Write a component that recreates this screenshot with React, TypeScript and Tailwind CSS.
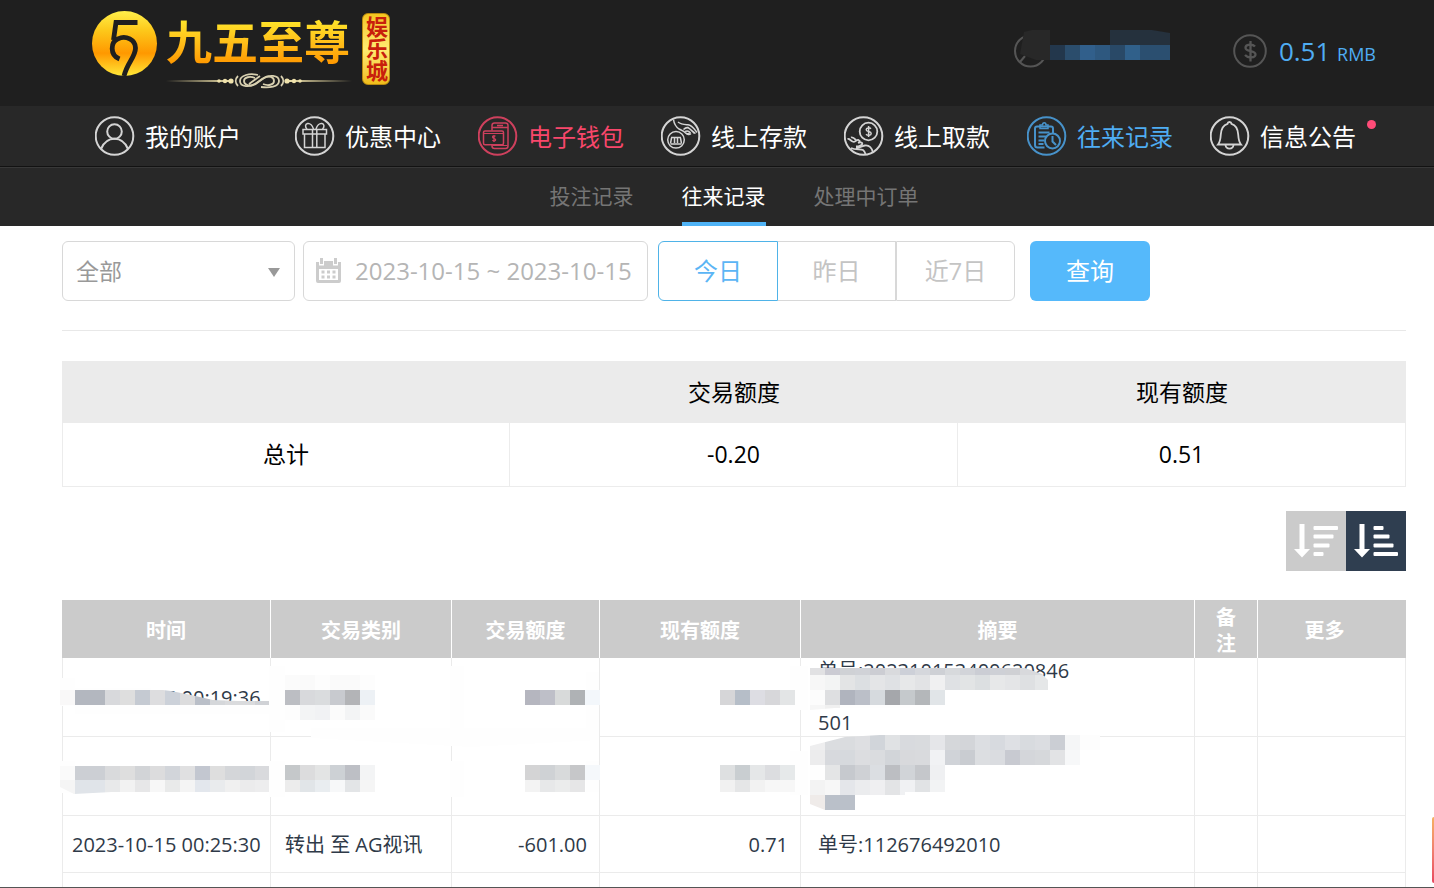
import React, { useState } from 'react';
import clsx from 'clsx';

type Strip = { x: number; y: number; h: number; colors: string[] };

const NAV_ITEMS = [
  { key: 'account', label: '我的账户', icon: AccountIcon },
  { key: 'promo', label: '优惠中心', icon: GiftIcon },
  { key: 'wallet', label: '电子钱包', icon: WalletIcon },
  { key: 'deposit', label: '线上存款', icon: DepositIcon },
  { key: 'withdraw', label: '线上取款', icon: WithdrawIcon },
  { key: 'records', label: '往来记录', icon: RecordsIcon },
  { key: 'notice', label: '信息公告', icon: BellIcon },
];

const SUB_TABS = ['投注记录', '往来记录', '处理中订单'];
const RANGES = ['今日', '昨日', '近7日'];

function IconFrame({ children }: { children: React.ReactNode }) {
  return (
    <svg className="h-10 w-10 shrink-0" viewBox="0 0 40 40" fill="none" stroke="currentColor" strokeWidth="1.5" aria-hidden="true">
      <circle cx="19.5" cy="20" r="18.8" strokeWidth="2" />
      {children}
    </svg>
  );
}

function AccountIcon() {
  return (
    <IconFrame>
      <circle cx="19.5" cy="15.5" r="7.3" strokeWidth="2" />
      <path d="M6 33c2.500-6 7.500-10.200 13.500-10.200S30.500 27 33 33" strokeWidth="2" />
    </IconFrame>
  );
}

function GiftIcon() {
  return (
    <IconFrame>
      <path d="M8 13.500h23.500v4.500H8zM9.500 18v13.500H30V18M17.500 13.500v18M21.800 13.500v18" />
      <path d="M18.500 13c-1-3.500-3.500-6-6-5.500s-2.500 3.500-.5 5.500M21 13c1-3.500 3.500-6 6-5.500s2.500 3.500.5 5.500" />
    </IconFrame>
  );
}

function WalletIcon() {
  return (
    <IconFrame>
      <path d="M14 14.500V9.500a2.500 2.500 0 0 1 2.500-2.500H27.500A2.500 2.500 0 0 1 30 9.500V30a2.500 2.500 0 0 1-2.500 2.500H16.500A2.500 2.500 0 0 1 14 30v-1M19 9.500h6M14.500 11.500h15" />
      <rect x="5.500" y="15" width="20" height="13.800" rx="1.500" />
      <path d="M5.500 17.500h20M14.500 29.500h15" strokeWidth="1" />
      <path d="M17.500 20.300c-1-.8-3-.6-3 .8 0 1.700 3.200 1 3.200 2.700 0 1.400-2.200 1.600-3.400.6M16 19v7" strokeWidth="1.200" />
    </IconFrame>
  );
}

function DepositIcon() {
  return (
    <IconFrame>
      <circle cx="15" cy="23.800" r="8.300" />
      <path d="M9.500 28h11M10.500 22l-1 5.500M13.500 22v5M16.500 22v5M19.500 22l1 5.500M10 21.500h10" strokeWidth="1.500" />
      <path d="M12.500 3.500c.5 4 2 7 5.500 9.500 2.500 1.500 4.500 1.500 6 3.500 1.500 1.500 3.500 1.500 4.500.5M17 6c3 2.500 6.500 2.500 10 2.800 4 .4 6.500 4.500 9 7.700" />
      <path d="M22.500 13.500c2-2 4.500-2.500 6.500-.5l4.500 4.500M24 15.500c2-1 4-.5 5.500 1.500M26.500 11l8 6.500M25 17c1 1.800 3.500 2 5 .5" />
    </IconFrame>
  );
}

function WithdrawIcon() {
  return (
    <IconFrame>
      <circle cx="24.500" cy="15.500" r="8.800" strokeWidth="1.800" />
      <path d="M27 12.700c-1.500-1.400-4.800-1.100-4.800 1 0 2.500 5 1.300 5 3.700 0 2.200-3.500 2.400-5.200.8M24.600 10v11" />
      <path d="M3.500 23c2-.5 3 1.500 5 2.500 3.500 1.500 3-2 6-1.500 2 .5 1.500 2-.5 2.800 2-.8 4-.8 4.300.7.200 1.500-3 3-6.300 3" strokeWidth="1.800" />
      <path d="M7 21.500c1-.5 3 .5 5 2.500M12 31.500c4 .5 6-1.500 9-2 4-.5 6.500 1.500 8 7M7 32c5 2.500 9 .5 12 2 1.500 1 2 2.500 2.500 4" strokeWidth="1.800" />
    </IconFrame>
  );
}

function RecordsIcon() {
  return (
    <IconFrame>
      <path d="M17.500 31.500h-7A2.500 2.500 0 0 1 8 29V12.500a2 2 0 0 1 2-2h14a2 2 0 0 1 2 2V17" strokeWidth="2" />
      <path d="M13 12.500V9h2.500c0-3 3.500-3 3.500 0H21v3.500z" />
      <path d="M11.500 16.500h11M11.500 20.500h7.500M11.500 24.500h5.500M11.500 28h5" strokeWidth="1.800" />
      <circle cx="25.500" cy="25" r="7.500" strokeWidth="2" />
      <path d="M25.500 20v5.500l3.500 3.500" strokeWidth="2" />
    </IconFrame>
  );
}

function BellIcon() {
  return (
    <IconFrame>
      <path d="M8 28.500c2.200-2.500 2.500-5 2.800-10C11.200 12 13.500 9 17.500 7.800c.3-2.400 3.700-2.400 4 0 4 1.200 6.300 4.200 6.700 10.700.3 5 .6 7.500 2.800 10z" strokeWidth="1.800" />
      <path d="M15.500 29c.5 4.800 7.500 4.800 8 0" strokeWidth="1.800" />
    </IconFrame>
  );
}

function Logo() {
  return (
    <a href="#home" className="flex items-start" aria-label="九五至尊娱乐城">
      <svg className="mt-[11px] h-[66px] w-[66px]" viewBox="0 0 66 66" aria-hidden="true">
        <defs>
          <linearGradient id="coin" x1="0" y1="0" x2="0" y2="1">
            <stop offset="0" stopColor="#fff04a" />
            <stop offset="0.3" stopColor="#fdc81a" />
            <stop offset="0.650" stopColor="#ff9800" />
            <stop offset="1" stopColor="#ffe838" />
          </linearGradient>
        </defs>
        <circle cx="32.500" cy="32.500" r="32.500" fill="url(#coin)" />
        <g fill="none" stroke="#1f1f1f" strokeWidth="4.800">
          <path d="M45.500 11.500H24L21.500 29" />
          <path d="M27.500 48C17.500 44 18.500 31 26 27.800 34 24 43.500 29 43.500 37c0 9-8 14-11.500 28" />
        </g>
      </svg>
      <div className="ml-2 mt-[18px]">
        <div className="bg-gradient-to-b from-[#ffe92c] to-[#ff9800] bg-clip-text text-[46px] leading-[46px] font-bold text-transparent">
          九五至尊
        </div>
        <svg className="mt-[9px] h-4 w-[188px]" viewBox="0 0 188 16" fill="none" aria-hidden="true">
          <defs>
            <linearGradient id="rule" x1="0" y1="0" x2="1" y2="0">
              <stop offset="0" stopColor="#e8d9a0" stopOpacity="0" />
              <stop offset="1" stopColor="#efe2ac" />
            </linearGradient>
            <linearGradient id="rule-end" x1="1" y1="0" x2="0" y2="0">
              <stop offset="0" stopColor="#e8d9a0" stopOpacity="0" />
              <stop offset="1" stopColor="#efe2ac" />
            </linearGradient>
          </defs>
          <path d="M0 7h66v2H0z" fill="url(#rule)" />
          <path d="M122 7h64v2h-64z" fill="url(#rule-end)" />
          <g fill="#efe2ac">
            <circle cx="53" cy="8" r="1.800" />
            <circle cx="59" cy="8" r="2.200" />
            <circle cx="65" cy="8" r="2.600" />
            <circle cx="121" cy="8" r="2.600" />
            <circle cx="128" cy="8" r="2.200" />
            <circle cx="134" cy="8" r="1.800" />
          </g>
          <g stroke="#d8d0b0" strokeWidth="1.800">
            <path d="M72 3c-3 3-3 7 0 10M115 3c3 3 3 7 0 10" />
            <path d="M92 2C84 0 74 2 74 8s10 7 17 2l7-5c5-3 10-1 10 3s-6 5-11 3" />
            <path d="M83 11l11-8M95 14c8 1 18 0 18-6s-10-7-17-2l-7 5c-5 3-11 1-11-3s6-5 11-3" />
          </g>
        </svg>
      </div>
      <div className="ml-2 mt-[13px] flex h-[72px] w-7 items-center justify-center rounded-md border border-[#b98a10] bg-gradient-to-b from-[#f5c51c] via-[#ffec70] to-[#f0bd18] text-[22px] leading-[26px] font-bold text-[#c8200c]">
        <span className="[writing-mode:vertical-rl]">娱乐城</span>
      </div>
    </a>
  );
}

function Header() {
  return (
    <header className="flex h-[106px] items-start justify-between bg-[#1f1f1f] pr-[58px] pl-[92px]">
      <Logo />
      <div className="mt-[30px] flex items-center">
        <svg className="h-[42px] w-[156px]" viewBox="0 0 156 42" aria-hidden="true">
          <circle cx="16.500" cy="21" r="15.500" fill="none" stroke="#555" strokeWidth="2" />
          <path d="M6 32l5-6" stroke="#555" strokeWidth="2" />
          <path d="M10 2L18 0h18v30H22L6 24z" fill="#282828" />
          <path d="M96 0h42l18 3v12H96z" fill="#25313d" />
          <g>
            <rect x="36" y="15" width="15" height="15" fill="#23374c" />
            <rect x="51" y="15" width="15" height="15" fill="#2b4d6c" />
            <rect x="66" y="15" width="15" height="15" fill="#315f8b" />
            <rect x="81" y="15" width="15" height="15" fill="#2e587f" />
            <rect x="96" y="15" width="15" height="15" fill="#294967" />
            <rect x="111" y="15" width="15" height="15" fill="#30608a" />
            <rect x="126" y="15" width="30" height="15" fill="#2b4f70" />
          </g>
        </svg>
        <svg className="ml-[63px] h-[34px] w-[34px]" viewBox="0 0 34 34" fill="none" stroke="#555" strokeWidth="2" aria-hidden="true">
          <circle cx="17" cy="17" r="15.800" />
          <path d="M22 12.500c-2.500-3-9.500-2.500-9.500 1.200 0 4.600 10 2.200 10 6.600 0 4-7.500 4.200-10.500.7M17.500 7v20.500" strokeWidth="2.300" />
        </svg>
        <p className="ml-3 text-[26px] leading-8 text-[#4fadf3]">
          0.51 <span className="text-lg">RMB</span>
        </p>
      </div>
    </header>
  );
}

function MainNav() {
  return (
    <nav className="flex h-[61px] items-center gap-[37px] border-b border-[#121212] bg-[#282828] pl-[95px] text-2xl whitespace-nowrap">
      {NAV_ITEMS.map(({ key, label, icon: Icon }) => (
        <a
          key={key}
          href={`#${key}`}
          className={clsx(
            'relative flex items-center gap-[10px]',
            key === 'account' && 'mr-[17px]',
            key === 'wallet' && 'text-[#f8476b]',
            key === 'records' && 'text-[#4fadf3]',
            key !== 'wallet' && key !== 'records' && 'text-white',
          )}
        >
          <span className="opacity-80">
            <Icon />
          </span>
          <span className="pt-0.5">{label}</span>
          {key === 'notice' && <span className="absolute top-1 -right-5 h-[9px] w-[9px] rounded-full bg-[#ff4c78]" />}
        </a>
      ))}
    </nav>
  );
}

function SubNav() {
  const [active, setActive] = useState(1);

  return (
    <nav className="flex h-[59px] justify-center gap-12 border-t border-[#383838] bg-[#282828] pr-7 pl-[62px] text-[21px]">
      {SUB_TABS.map((tab, i) => (
        <a
          key={tab}
          href="#records"
          onClick={() => setActive(i)}
          className={clsx(
            'border-b-4 leading-[56px]',
            active === i ? 'border-[#4fb3f6] text-white' : 'border-transparent text-[#757575]',
          )}
        >
          {tab}
        </a>
      ))}
    </nav>
  );
}

function Filters() {
  const [range, setRange] = useState(0);

  return (
    <form className="flex h-[90px] items-start border-b border-[#e8e8e8]" onSubmit={(e) => e.preventDefault()}>
      <div className="relative">
        <select
          aria-label="交易类别"
          className="h-[60px] w-[233px] appearance-none rounded-md border border-[#d8d8d8] bg-white pl-[13px] text-[23px] text-[#999]"
        >
          <option>全部</option>
        </select>
        <svg className="pointer-events-none absolute top-[27px] right-[15px] h-[9px] w-3" viewBox="0 0 12 9" aria-hidden="true">
          <path d="M0 0h12L6 9z" fill="#999" />
        </svg>
      </div>

      <label className="ml-2 flex h-[60px] w-[345px] items-center rounded-md border border-[#d8d8d8] pl-3">
        <svg className="h-[26px] w-[26px] shrink-0" viewBox="0 0 26 26" aria-hidden="true">
          <path d="M0 4h3v3.500h5V3h9v4.500h5V4h3v19a2 2 0 0 1-2 2H2a2 2 0 0 1-2-2z" fill="#ccc" />
          <path d="M3 11h19v11H3z" fill="#fff" />
          <path d="M4 0h3v6H4zM18 0h3v6h-3z" fill="#ccc" />
          <path d="M5.500 12.500h3v3h-3zM11 12.500h3v3h-3zM16.500 12.500h3v3h-3zM5.500 17.500h3v3h-3zM11 17.500h3v3h-3zM16.500 17.500h3v3h-3z" fill="#ccc" />
        </svg>
        <input
          type="text"
          readOnly
          aria-label="日期"
          value="2023-10-15 ~ 2023-10-15"
          className="ml-[13px] w-full min-w-0 text-2xl text-[#b5b5b5] outline-none"
        />
      </label>

      <div className="ml-[10px] flex text-2xl">
        {RANGES.map((label, i) => (
          <button
            key={label}
            type="button"
            onClick={() => setRange(i)}
            className={clsx(
              'h-[60px] border',
              i === 0 && 'w-[120px] rounded-l-md',
              i === 1 && 'w-[118px] border-l-0',
              i === 2 && 'w-[119px] rounded-r-md',
              range === i ? 'border-[#4fb3e8] text-[#5bb5f5]' : 'border-[#d8d8d8] text-[#c4c4c4]',
            )}
          >
            {label}
          </button>
        ))}
      </div>

      <button type="submit" className="ml-[15px] h-[60px] w-[120px] rounded-md bg-[#55b9fb] text-2xl text-white">
        查询
      </button>
    </form>
  );
}

function SummaryTable() {
  return (
    <table className="mt-[30px] w-full table-fixed border-separate border-spacing-0 text-center text-[23px] text-black">
      <thead>
        <tr className="h-[62px] bg-[#ebebeb]">
          <th aria-label="项目" />
          <th className="font-normal">交易额度</th>
          <th className="font-normal">现有额度</th>
        </tr>
      </thead>
      <tbody>
        <tr className="h-16">
          <td className="border-x border-b border-[#ececec]">总计</td>
          <td className="border-r border-b border-[#ececec]">-0.20</td>
          <td className="border-r border-b border-[#ececec]">0.51</td>
        </tr>
      </tbody>
    </table>
  );
}

function SortButtons() {
  return (
    <div className="mt-6 flex justify-end">
      <button type="button" aria-label="降序" className="h-[60px] w-[60px] bg-[#cbcbcb]">
        <svg viewBox="0 0 60 60" fill="#fff">
          <path d="M13.500 13h5v25h5.500L16 46.500 8 38h5.500z" />
          <g>
            <rect x="27.500" y="15" width="24.500" height="4" rx="1" />
            <rect x="27.500" y="23.500" width="20" height="4" rx="1" />
            <rect x="27.500" y="32.500" width="16" height="4" rx="1" />
            <rect x="27.500" y="41" width="10" height="4" rx="1" />
          </g>
        </svg>
      </button>
      <button type="button" aria-label="升序" className="h-[60px] w-[60px] bg-[#2f3e50]">
        <svg viewBox="0 0 60 60" fill="#fff">
          <path d="M13.500 13h5v25h5.500L16 46.500 8 38h5.500z" />
          <g>
            <rect x="27.500" y="15" width="10" height="4" rx="1" />
            <rect x="27.500" y="23.500" width="16" height="4" rx="1" />
            <rect x="27.500" y="32.500" width="20" height="4" rx="1" />
            <rect x="27.500" y="41" width="24.500" height="4" rx="1" />
          </g>
        </svg>
      </button>
    </div>
  );
}

// Blocks that hide private values, 15px cells laid over a table cell
function Mosaic({ id, clip, wipe, strips }: { id: string; clip?: string; wipe?: string; strips: Strip[] }) {
  return (
    <svg className="pointer-events-none absolute top-0 left-0 z-10 h-px w-px overflow-visible" shapeRendering="crispEdges" aria-hidden="true">
      {clip && (
        <clipPath id={id}>
          <path d={clip} />
        </clipPath>
      )}
      {wipe && <path d={wipe} fill="#fefefe" />}
      <g clipPath={clip ? `url(#${id})` : undefined}>
        {strips.map((s) =>
          s.colors.map((c, i) => <rect key={`${s.y}-${i}`} x={s.x + i * 15} y={s.y} width="15" height={s.h} fill={c} />),
        )}
      </g>
    </svg>
  );
}

const cell = 'relative border-r border-b border-[#ebebeb]';

function RecordsTable() {
  return (
    <table className="mt-[29px] w-full table-fixed border-separate border-spacing-0 text-xl leading-[26px] text-[#2f3a48]">
      <colgroup>
        <col className="w-[15.550%]" />
        <col className="w-[13.470%]" />
        <col className="w-[11.010%]" />
        <col className="w-[14.960%]" />
        <col className="w-[29.310%]" />
        <col className="w-[4.690%]" />
        <col />
      </colgroup>
      <thead>
        <tr className="h-[58px] bg-[#cbcbcb] text-white">
          {['时间', '交易类别', '交易额度', '现有额度', '摘要', '备注', '更多'].map((title) => (
            <th key={title} className="border-r border-white px-4 pt-[3px] font-bold last:border-[#cbcbcb] last:pr-[30px]">
              {title}
            </th>
          ))}
        </tr>
      </thead>
      <tbody>
        <tr className="h-[79px]">
          <td className={clsx(cell, 'border-l pt-0.5 pl-[9px] whitespace-nowrap')}>
            2023-10-15 00:19:36
            <Mosaic
              id="t1"
              clip="M-3 31H92L108 33L128 37L150 42L175 43H209V47H-3z"
              wipe="M-3 20H12V48H-3zM12 30H88V34H12zM12 47H207V56H12z"
              strips={[{ x: -3, y: 32, h: 15, colors: ['#f9f8f8', '#b3b7bf', '#b3b7bf', '#d8d9dc', '#dedede', '#c5cad2', '#dddddf', '#ccd1d9', '#dcdcdd', '#babfc8', '#d5d7da', '#dadbdd', '#dadbdd', '#d0d2d6'] }]}
            />
          </td>
          <td className={cell}>
            <Mosaic
              id="k1"
              wipe="M-2 8H14V74H-2zM40 70H328V82L200 89L40 80z"
              strips={[
                { x: 14, y: 17, h: 15, colors: ['#fbfbfb', '#fafafa', '#fdfdfd', '#fafafa', '#fafafa', '#fdfdfd'] },
                { x: 14, y: 32, h: 15, colors: ['#bcbec3', '#d8d9dc', '#dadcde', '#c8cacf', '#b3b4b7', '#edf1f5'] },
                { x: 14, y: 47, h: 15, colors: ['#fdfdfd', '#f3f4f5', '#f1f2f4', '#fbfbfb', '#f3f4f5', '#fafafa'] },
              ]}
            />
          </td>
          <td className={cell}>
            <Mosaic id="a1" wipe="M-2 8H12V74H-2zM134 14H147V78H134z" strips={[{ x: 73, y: 32, h: 15, colors: ['#b5b6bf', '#bebfc8', '#d8dada', '#afb2b5', '#f3f7fb'] }]} />
          </td>
          <td className={cell}>
            <Mosaic id="b1" wipe="M190 8H208V52H190z" strips={[{ x: 120, y: 32, h: 15, colors: ['#d6d6d8', '#b6bec8', '#dddde3', '#d7d7da', '#e3e5e6'] }]} />
          </td>
          <td className={clsx(cell, 'pl-[17px] align-top')}>
            单号:202310153400620846
            <br />
            <br />
            501
            <Mosaic
              id="s1"
              clip="M9 10H224L241 16L247 22V32H144V47H109V50H34L9 52z"
              strips={[
                { x: 9, y: 10, h: 7, colors: ['#e1e1e3', '#cbcbd3', '#cfd1d5', '#d0d2d7', '#cccdd3', '#d9dadd', '#cdd0d8', '#d5d7dc', '#ced0d5', '#d7d9dc', '#d2d4d9', '#cbcdd4', '#ced0d6', '#cfd0d4', '#d8d9dc', '#d8dadd'] },
                { x: 9, y: 17, h: 15, colors: ['#f7f7f7', '#f3f4f4', '#e3e4e5', '#dcdfe2', '#e4e5e7', '#dfe1e4', '#e7e8e9', '#e2e3e5', '#f0f0f1', '#dfe1e4', '#e2e4e5', '#dcdfe1', '#e7e8e9', '#e4e5e7', '#dee0e2', '#e5e7e8'] },
                { x: 9, y: 32, h: 15, colors: ['#fcfcfc', '#dedfe1', '#b0b4be', '#bbbfc8', '#d6dade', '#a5a7ab', '#c5c9cc', '#b4b7ba', '#e1e5e8'] },
                { x: 9, y: 47, h: 5, colors: ['#f6f6f6', '#f0f0f0', '#fefefe', '#fefefe', '#fefefe', '#fefefe', '#fefefe'] },
              ]}
            />
          </td>
          <td className={cell} />
          <td className={cell} />
        </tr>
        <tr className="h-[79px]">
          <td className={clsx(cell, 'border-l')}>
            <Mosaic
              id="t2"
              clip="M-3 29H209V55H49L11 57L-3 50z"
              wipe="M-3 24H12V56H-3z"
              strips={[
                { x: -3, y: 28, h: 15, colors: ['#fafafa', '#cccfd4', '#cccfd4', '#d9dadc', '#dedede', '#d2d4d7', '#dcdcdd', '#d2d5da', '#e0e0e1', '#c3c7d0', '#dedede', '#d4d6d9', '#d2d5d9', '#d9dadd'] },
                { x: -3, y: 43, h: 14, colors: ['#f5f5f5', '#e0e4e9', '#e0e4e9', '#e8e9ea', '#f2f2f2', '#e7e7e8', '#f7f7f7', '#e9eaea', '#f4f4f4', '#e3e7ed', '#e9ebed', '#f0f0f0', '#ebebec', '#ededee'] },
              ]}
            />
          </td>
          <td className={cell}>
            <Mosaic
              id="k2"
              wipe="M-2 24H14V60H-2z"
              strips={[
                { x: 14, y: 28, h: 15, colors: ['#c5c8ca', '#dcdcdd', '#e3e4e4', '#cdd1d5', '#bdbfc5', '#f3f4f5'] },
                { x: 14, y: 43, h: 12, colors: ['#ececec', '#e1e5e8', '#e9edf0', '#f7f8f9', '#e3e5e7', '#f5f5f5'] },
              ]}
            />
          </td>
          <td className={cell}>
            <Mosaic
              id="a2"
              wipe="M-2 24H12V60H-2zM134 24H147V55H134z"
              strips={[
                { x: 73, y: 28, h: 15, colors: ['#d4d4d5', '#cfd2d5', '#d8dadb', '#c6c7c9', '#f5f8fb'] },
                { x: 73, y: 43, h: 12, colors: ['#f3f3f3', '#e7e8e9', '#ebecec', '#e6e6e7'] },
              ]}
            />
          </td>
          <td className={cell}>
            <Mosaic
              id="b2"
              wipe="M190 14H208V58H190z"
              strips={[
                { x: 120, y: 28, h: 15, colors: ['#dee0e1', '#c9ced1', '#e5e7e8', '#dcdde0', '#e6e9ea'] },
                { x: 120, y: 43, h: 12, colors: ['#f1f1f1', '#e5e6e7', '#f2f2f2', '#f7f7f7', '#f7f7f7'] },
              ]}
            />
          </td>
          <td className={cell}>
            <Mosaic
              id="s2"
              clip="M9 9L44 0L79 -2H299V13H279V28H144V55H104V58H54V73H24L9 67z"
              strips={[
                { x: 9, y: -2, h: 15, colors: ['#eeeeef', '#dbdde0', '#dadcdf', '#dedfe2', '#d1d5da', '#e0e2e4', '#d8dade', '#d9dbde', '#e5e6e9', '#d5d7da', '#d3d5d9', '#dcdee2', '#d7dadf', '#dee0e4', '#d8dbdf', '#dbdde1', '#cbced4', '#f5f6f7', '#fdfdfd', '#fdfdfd'] },
                { x: 9, y: 13, h: 15, colors: ['#ececed', '#d7d9dd', '#d6d9dd', '#dcdde0', '#dadcdf', '#d2d5d9', '#d8d9dc', '#d9dadd', '#f1f2f4', '#d0d3d8', '#c9ccd1', '#dcdee1', '#dadce0', '#c8cad1', '#d4d6da', '#d6d8db', '#e2e3e5', '#f7f8f9'] },
                { x: 9, y: 28, h: 15, colors: ['#fefefe', '#e4e5e6', '#c6c9ce', '#cfd1d5', '#dbdee2', '#bcbec2', '#d1d4d8', '#c5c7cb', '#eff0f2'] },
                { x: 9, y: 43, h: 15, colors: ['#f3f3f3', '#f7f7f7', '#e4e6ea', '#ebecee', '#efeff1', '#e3e4e6', '#f0f1f3', '#e1e3e5', '#f2f3f4'] },
                { x: 9, y: 58, h: 15, colors: ['#efebe9', '#bac0c9', '#bac0c9'] },
              ]}
            />
          </td>
          <td className={cell} />
          <td className={cell} />
        </tr>
        <tr className="h-[57px]">
          <td className={clsx(cell, 'border-l pt-0.5 pl-[9px] whitespace-nowrap')}>2023-10-15 00:25:30</td>
          <td className={clsx(cell, 'pt-0.5 pl-[14px]')}>转出 至 AG视讯</td>
          <td className={clsx(cell, 'pt-0.5 pr-3 text-right')}>-601.00</td>
          <td className={clsx(cell, 'pt-0.5 pr-3 text-right')}>0.71</td>
          <td className={clsx(cell, 'pt-0.5 pl-[17px]')}>单号:112676492010</td>
          <td className={cell} />
          <td className={cell} />
        </tr>
        <tr className="h-[57px]">
          <td className={clsx(cell, 'border-l')} />
          <td className={cell} />
          <td className={cell} />
          <td className={cell} />
          <td className={cell} />
          <td className={cell} />
          <td className={cell} />
        </tr>
      </tbody>
    </table>
  );
}

function App() {
  return (
    <div className="relative h-screen overflow-hidden border-b border-[#555] bg-white font-['Open_Sans','Noto_Sans_CJK_SC',sans-serif]">
      <Header />
      <MainNav />
      <SubNav />
      <main className="pt-[15px] pr-7 pl-[62px]">
        <Filters />
        <SummaryTable />
        <SortButtons />
        <RecordsTable />
      </main>

      {/* Edge of the floating promo panel */}
      <div className="absolute right-0 bottom-1 h-[66px] w-[2px] rounded-l-sm bg-gradient-to-b from-[#f5b060] via-[#f08070] to-[#e8475f]" />
    </div>
  );
}

export default App;
